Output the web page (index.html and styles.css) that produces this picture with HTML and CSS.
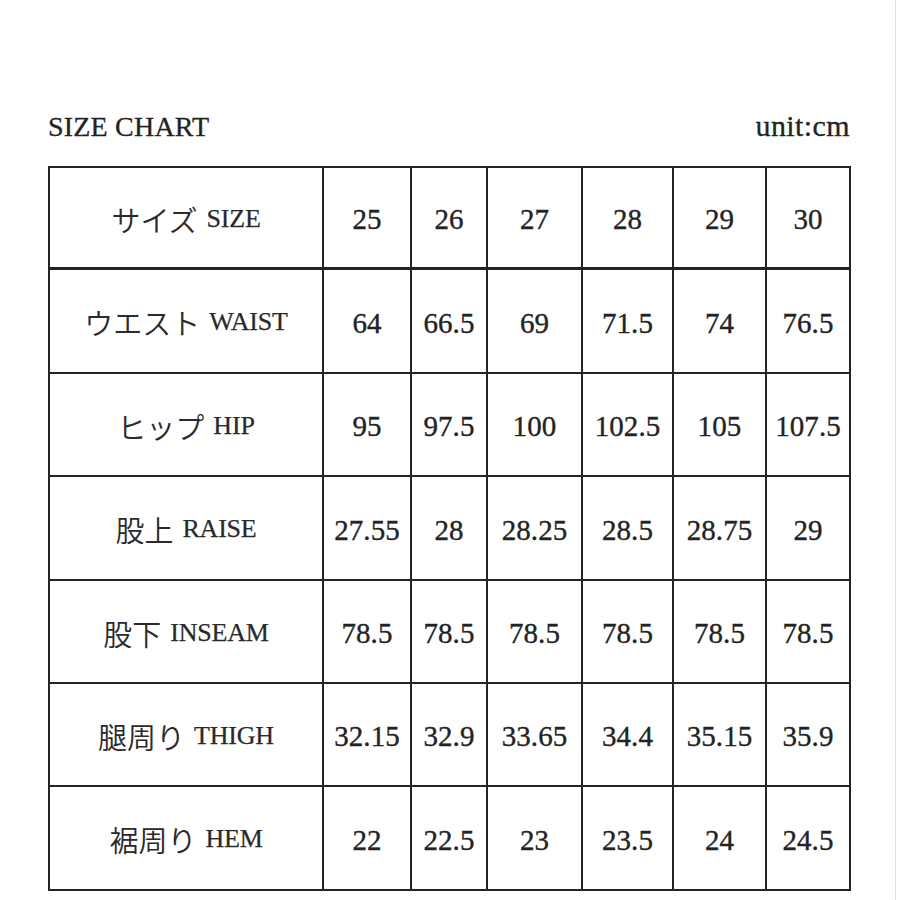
FILE: index.html
```html
<!DOCTYPE html>
<html lang="ja">
<head>
<meta charset="utf-8">
<title>SIZE CHART</title>
<link rel="stylesheet" href="styles.css">
</head>
<body>
<div class="page">
  <div class="head">
    <div class="title">SIZE CHART</div>
    <div class="unit">unit:cm</div>
  </div>
  <div class="chart">
    <div class="cell label hdr"><span class="jp">サイズ</span><span class="en">SIZE</span></div>
    <div class="cell num hdr">25</div>
    <div class="cell num hdr">26</div>
    <div class="cell num hdr">27</div>
    <div class="cell num hdr">28</div>
    <div class="cell num hdr">29</div>
    <div class="cell num hdr">30</div>

    <div class="cell label"><span class="jp">ウエスト</span><span class="en">WAIST</span></div>
    <div class="cell num">64</div>
    <div class="cell num">66.5</div>
    <div class="cell num">69</div>
    <div class="cell num">71.5</div>
    <div class="cell num">74</div>
    <div class="cell num">76.5</div>

    <div class="cell label"><span class="jp">ヒップ</span><span class="en">HIP</span></div>
    <div class="cell num">95</div>
    <div class="cell num">97.5</div>
    <div class="cell num">100</div>
    <div class="cell num">102.5</div>
    <div class="cell num">105</div>
    <div class="cell num">107.5</div>

    <div class="cell label"><span class="jp">股上</span><span class="en">RAISE</span></div>
    <div class="cell num">27.55</div>
    <div class="cell num">28</div>
    <div class="cell num">28.25</div>
    <div class="cell num">28.5</div>
    <div class="cell num">28.75</div>
    <div class="cell num">29</div>

    <div class="cell label"><span class="jp">股下</span><span class="en">INSEAM</span></div>
    <div class="cell num">78.5</div>
    <div class="cell num">78.5</div>
    <div class="cell num">78.5</div>
    <div class="cell num">78.5</div>
    <div class="cell num">78.5</div>
    <div class="cell num">78.5</div>

    <div class="cell label"><span class="jp">腿周り</span><span class="en">THIGH</span></div>
    <div class="cell num">32.15</div>
    <div class="cell num">32.9</div>
    <div class="cell num">33.65</div>
    <div class="cell num">34.4</div>
    <div class="cell num">35.15</div>
    <div class="cell num">35.9</div>

    <div class="cell label"><span class="jp">裾周り</span><span class="en">HEM</span></div>
    <div class="cell num">22</div>
    <div class="cell num">22.5</div>
    <div class="cell num">23</div>
    <div class="cell num">23.5</div>
    <div class="cell num">24</div>
    <div class="cell num">24.5</div>
  </div>
</div>
</body>
</html>
```

FILE: styles.css
```css
html, body {
  margin: 0;
  padding: 0;
  background: #ffffff;
}

body {
  font-family: "Liberation Serif", "Noto Sans CJK JP", serif;
  color: #232323;
}

.page {
  width: 896px;
  height: 900px;
  box-sizing: border-box;
  border-right: 1px solid #e2e2e2;
  padding: 112px 0 0 48px;
}

.head {
  width: 803px;
  display: flex;
  justify-content: space-between;
  align-items: baseline;
  height: 27px;
  line-height: 27px;
  margin-bottom: 27px;
}

.title {
  font-size: 28px;
  letter-spacing: 0.2px;
  -webkit-text-stroke: 0.3px #232323;
}

.unit {
  font-size: 30px;
  letter-spacing: 0.4px;
  padding-right: 1px;
  -webkit-text-stroke: 0.3px #232323;
}

.chart {
  width: 803px;
  display: grid;
  grid-template-columns: 272px 86px 74px 93px 89px 91px 82px;
  grid-template-rows: 100px 102px 101px 102px 101px 101px 102px;
  gap: 2px;
  padding: 2px;
  box-sizing: border-box;
  background: #242424;
}

.cell {
  background: #ffffff;
  display: flex;
  align-items: center;
  justify-content: center;
  white-space: nowrap;
}

.hdr {
  border-bottom: 1px solid #242424;
}

.num {
  font-size: 29px;
  font-variant-numeric: oldstyle-nums;
  letter-spacing: 0.1px;
  padding-top: 4px;
  box-sizing: border-box;
  -webkit-text-stroke: 0.35px #232323;
}

.label {
  padding-top: 2px;
  box-sizing: border-box;
}

.jp {
  font-family: "Noto Sans CJK JP", sans-serif;
  font-weight: 350;
  font-size: 29px;
  color: #2a2a2a;
  margin-right: 9px;
}

.en {
  font-family: "Liberation Serif", serif;
  font-size: 26px;
  letter-spacing: -0.2px;
  color: #2a2a2a;
  -webkit-text-stroke: 0.25px #2a2a2a;
}
```
